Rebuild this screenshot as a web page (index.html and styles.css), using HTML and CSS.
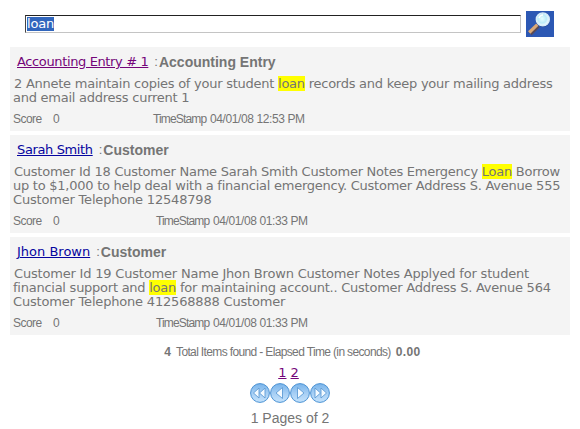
FILE: index.html
```html
<!DOCTYPE html>
<html lang="en">
<head>
<meta charset="utf-8">
<title>Search</title>
<link rel="stylesheet" href="styles.css">
</head>
<body>
<form class="search">
  <div class="field"><span class="selected">loan</span></div>
  <svg class="lens" viewBox="0 0 28 26" width="28" height="26">
    <defs><radialGradient id="glass" cx=".45" cy=".45"><stop offset="0" stop-color="#e9ffff"/><stop offset=".65" stop-color="#bcebf8"/><stop offset="1" stop-color="#eaf8ff"/></radialGradient></defs>
    <rect width="28" height="26" fill="#2c58b4"/>
    <path d="M4 22.5 12 14.5" stroke="#5a4a55" stroke-width="4.6"/>
    <path d="M3.2 21.5 11.3 13.6" stroke="#d9a877" stroke-width="3.2"/>
    <circle cx="17" cy="9" r="7" fill="#173f91"/>
    <circle cx="16.8" cy="8.4" r="6.5" fill="url(#glass)" stroke="#d8edf8" stroke-width="1.4"/>
    <path d="M13 7Q14 4 17 4" fill="none" stroke="#fff" stroke-width="1.5"/>
  </svg>
</form>
<main class="results">
  <article class="card first">
    <h2><a class="visited tight" href="#">Accounting Entry # 1</a><span class="colon">:</span><b>Accounting Entry</b></h2>
    <p><span class="line indent">2 Annete maintain copies of your student <mark>loan</mark> records and keep your mailing address</span><span class="line">and email address current 1</span></p>
    <div class="meta"><span class="label">Score</span><span class="score">0</span><span class="stamp">TimeStamp</span><span class="date">04/01/08 12:53 PM</span></div>
  </article>
  <article class="card second">
    <h2><a class="tight" href="#">Sarah Smith</a><span class="colon">:</span><b>Customer</b></h2>
    <p><span class="line indent">Customer Id 18 Customer Name Sarah Smith Customer Notes Emergency <mark>Loan</mark> Borrow</span><span class="line">up to $1,000 to help deal with a financial emergency. Customer Address S. Avenue 555</span><span class="line loose">Customer Telephone 12548798</span></p>
    <div class="meta"><span class="label">Score</span><span class="score late">0</span><span class="stamp">TimeStamp</span><span class="date">04/01/08 01:33 PM</span></div>
  </article>
  <article class="card third">
    <h2><a href="#">Jhon Brown</a><span class="colon">:</span><b>Customer</b></h2>
    <p><span class="line indent loose">Customer Id 19 Customer Name Jhon Brown Customer Notes Applyed for student</span><span class="line">financial support and <mark>loan</mark> for maintaining account.. Customer Address S. Avenue 564</span><span class="line loose">Customer Telephone 412568888 Customer</span></p>
    <div class="meta"><span class="label">Score</span><span class="score late">0</span><span class="stamp">TimeStamp</span><span class="date">04/01/08 01:33 PM</span></div>
  </article>
</main>
<footer>
  <div class="summary"><b>4</b><span class="found">Total Items found - Elapsed Time (in seconds)</span><b class="time">0.00</b></div>
  <div class="numbers"><a class="visited" href="#">1</a><a class="visited" href="#">2</a></div>
  <svg class="pager" width="80" height="20" viewBox="0 0 80 20">
    <defs><linearGradient id="ball" x2="0" y2="1"><stop offset="0" stop-color="#79b4ea"/><stop offset=".55" stop-color="#a9d0f5"/><stop offset="1" stop-color="#c5e3fc"/></linearGradient></defs>
    <g fill="url(#ball)" stroke="#4c92d3"><circle cx="10" cy="10" r="9.4"/><circle cx="30" cy="10" r="9.4"/><circle cx="50" cy="10" r="9.4"/><circle cx="70" cy="10" r="9.4"/></g>
    <g fill="#f4faff" stroke="#5d9bd5" stroke-width=".9" stroke-linejoin="round"><path d="M9 5V15L3.5 10ZM15 5V15L9.5 10ZM32.5 4.5V15.5L26 10ZM47.5 4.5V15.5L54 10ZM65 5V15L70.5 10ZM71 5V15L76.5 10Z"/></g>
  </svg>
  <div class="pages">1 Pages of 2</div>
</footer>
</body>
</html>
```
FILE: styles.css
```css
body { margin: 0; background: #fff; color: #757575; font: 13px/14px "DejaVu Sans", sans-serif; }
.search { display: flex; height: 47px; padding: 11px 0 0 25px; box-sizing: border-box; margin: 0; }
.field { width: 496px; height: 18px; box-sizing: border-box; margin: 4px 5px 0 0; border: 1px solid #c4c4c4; border-top-color: #222; border-left-color: #444; padding: 1px; }
.selected { display: inline-block; height: 14px; line-height: 14px; background: #3166bd; color: #fff; letter-spacing: -.2px; }
.lens { display: block; }
.results { display: flex; flex-direction: column; gap: 4px; width: 560px; margin-left: 10px; }
.card { background: #f4f4f4; box-sizing: border-box; padding: 7px 0 0 3px; }
.first { height: 84px; }
.second, .third { height: 98px; }
h2 { display: flex; height: 16px; line-height: 16px; margin: 0 0 0 4px; font-size: 13px; font-weight: normal; white-space: nowrap; }
a { color: #0505a0; text-underline-offset: 1px; }
.visited { color: #74057a; }
.tight { letter-spacing: -.37px; }
.colon { margin: 0 1px 0 6px; font-family: "Liberation Sans", sans-serif; }
h2 b { font-family: "Liberation Sans", sans-serif; font-size: 14px; }
p { margin: 7px 0 0; white-space: nowrap; }
.line { display: block; height: 14px; letter-spacing: -.25px; }
.loose { letter-spacing: -.19px; }
.indent { padding-left: 1px; }
mark { background: #ff0; color: #757575; }
.meta { display: flex; margin-top: 7px; font: 12px/14px "Liberation Sans", sans-serif; letter-spacing: -.4px; white-space: nowrap; }
.label { width: 40px; letter-spacing: -.55px; }
.score { width: 100px; }
.late { width: 103px; }
.stamp { width: 57px; letter-spacing: -.85px; }
footer { display: flex; flex-direction: column; align-items: center; }
.summary { display: flex; gap: 5px; margin-top: 10px; font: 12px/14px "Liberation Sans", sans-serif; margin-left: 5px; white-space: nowrap; }
.found { letter-spacing: -.64px; }
.time { letter-spacing: .4px; }
.numbers { display: flex; gap: 4px; margin: 6px 3px 0 0; line-height: 15px; }
.pager { display: block; margin-top: 3px; }
.pages { margin-top: 7px; font: 14px/16px "Liberation Sans", sans-serif; }
```
